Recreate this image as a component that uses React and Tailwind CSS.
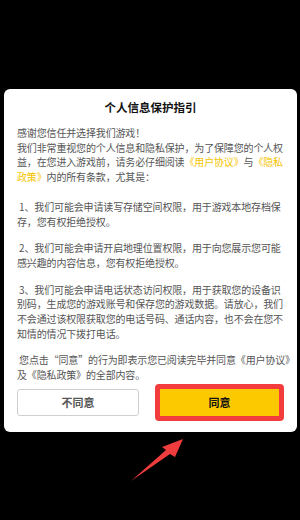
const hl = "text-[#f5c400]";

function Line({ children }) {
  return <div className="whitespace-nowrap">{children}</div>;
}

export default function App() {
  return (
    <div
      className="w-[300px] h-[520px] bg-black overflow-hidden flex flex-col"
      style={{ fontFamily: '"Noto Sans CJK SC", "Noto Sans", sans-serif' }}
    >
      <div className="mt-[89px] ml-[4px] w-[293px] rounded-[6px] bg-white pt-[9px] px-[13px] pb-[11px]">
        <div className="text-center text-[11.5px] font-bold text-[#111] leading-[18px]">
          个人信息保护指引
        </div>

        <div className="mt-[10px] text-[10px] tracking-[-0.15px] leading-[14.7px] text-[#555]">
          <Line>感谢您信任并选择我们游戏！</Line>
          <Line>我们非常重视您的个人信息和隐私保护，为了保障您的个人权</Line>
          <Line>
            益，在您进入游戏前，请务必仔细阅读<span className={hl}>《用户协议》</span>与<span className={hl}>《隐私</span>
          </Line>
          <Line>
            <span className={hl}>政策》</span>内的所有条款，尤其是：
          </Line>

          <div className="mt-[15px]">
            <Line>&nbsp;1、我们可能会申请读写存储空间权限，用于游戏本地存档保</Line>
            <Line>存，您有权拒绝授权。</Line>
          </div>

          <div className="mt-[12px]">
            <Line>&nbsp;2、我们可能会申请开启地理位置权限，用于向您展示您可能</Line>
            <Line>感兴趣的内容信息，您有权拒绝授权。</Line>
          </div>

          <div className="mt-[12px]">
            <Line>&nbsp;3、我们可能会申请电话状态访问权限，用于获取您的设备识</Line>
            <Line>别码，生成您的游戏账号和保存您的游戏数据。请放心，我们</Line>
            <Line>不会通过该权限获取您的电话号码、通话内容，也不会在您不</Line>
            <Line>知情的情况下拨打电话。</Line>
          </div>

          <div className="mt-[12px]">
            <Line>&nbsp;您点击“同意”的行为即表示您已阅读完毕并同意《用户协议》</Line>
            <Line>及《隐私政策》的全部内容。</Line>
          </div>
        </div>

        <div className="mt-[1px] flex items-center">
          <div className="w-[123px] h-[27px] rounded-[3px] border border-[#cfcfcf] flex items-center justify-center text-[11px] font-bold text-[#555]">
            不同意
          </div>
          <div className="ml-[16px] w-[130px] h-[37px] rounded-[4px] border-[5px] border-[#f33c3c] bg-[#fcc800] flex items-center justify-center text-[11px] font-bold text-[#111]">
            同意
          </div>
        </div>
      </div>

      <svg width="300" height="87" viewBox="0 0 300 87" className="block">
        <polygon
          points="131,49 166,18 162,15 183,7 175,25 170,22"
          fill="#f03c3c"
        />
      </svg>
    </div>
  );
}
